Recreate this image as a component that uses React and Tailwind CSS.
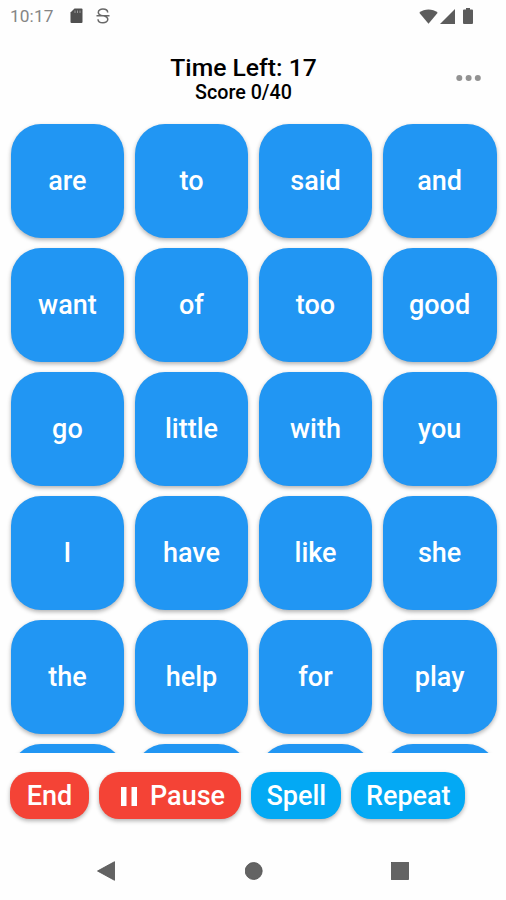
import React from 'react'

const words = [
    'are', 'to', 'said', 'and',
    'want', 'of', 'too', 'good',
    'go', 'little', 'with', 'you',
    'I', 'have', 'like', 'she',
    'the', 'help', 'for', 'play',
    '', '', '', '',
]

const StatusBar = () => {
    return (
        <div className="flex h-8 shrink-0 items-center justify-between pl-2.5 pr-[33px] text-[#6b6b6b]">
            <div className="flex items-center">
                <span className="w-[45px] text-[17.3px] leading-8 tracking-[0.1px] whitespace-nowrap text-[#858585]">10:17</span>
                <svg className="ml-[15px]" width="13" height="16" viewBox="0 0 13 16">
                    <path d="M4.5 0.5H11.5Q12.5 0.5 12.5 1.5V14Q12.5 15 11.5 15H1.5Q0.5 15 0.5 14V4.5Z" fill="#505050" />
                    <path d="M5 2.5V5M7.5 2.5V5M10 2.5V5" stroke="#999" strokeWidth="1" />
                </svg>
                <svg className="ml-[13px]" width="14" height="16" viewBox="0 0 14 16" fill="none" stroke="#686868" strokeWidth="1.5">
                    <path d="M11.7 4.5C11.5 0 2.3 0 2.3 4.4C2.3 6.2 4 7.1 6.8 7.8M7.5 7.8C10 8.5 11.8 9.3 11.8 11.3C11.8 16 2.2 16 2 11.2M0.5 7.8H13.5" />
                </svg>
            </div>
            <div className="flex items-center">
                <svg width="19" height="15" viewBox="0 0 19 15">
                    <path d="M0.3 3.8C5.5 -0.5 13.5 -0.5 18.7 3.8L9.5 14.8Z" fill="#5c5c5c" />
                </svg>
                <svg className="ml-[2px]" width="15" height="15" viewBox="0 0 15 15">
                    <path d="M15 0V15H0Z" fill="#5c5c5c" />
                </svg>
                <svg className="ml-[8px]" width="10" height="16" viewBox="0 0 10 16">
                    <path d="M3 0H7V1.5H9Q10 1.5 10 2.5V15Q10 16 9 16H1Q0 16 0 15V2.5Q0 1.5 1 1.5H3Z" fill="#5c5c5c" />
                </svg>
            </div>
        </div>
    )
}

const Header = () => {
    return (
        <div className="flex h-[82px] shrink-0 items-center pr-[24px]">
            <div className="w-[26px]" />
            <div className="flex-1 pt-[11px] pl-[5px] text-center font-medium text-black">
                <h1 className="text-[24.7px] leading-7">Time Left: 17</h1>
                <p className="text-[19.7px] leading-[22px]">Score 0/40</p>
            </div>
            <button className="w-[26px] cursor-pointer pt-[10px]">
                <svg width="26" height="8" viewBox="0 0 26 8" fill="#929292">
                    <circle cx="3.3" cy="4" r="3" />
                    <circle cx="12.6" cy="4" r="3" />
                    <circle cx="21.8" cy="4" r="3" />
                </svg>
            </button>
        </div>
    )
}

const WordTile = ({ word }) => {
    return (
        <button className="flex h-[114px] cursor-pointer items-center justify-center rounded-[30px] bg-[#2196f3] pt-px text-[27px] font-medium text-white shadow-[0_2px_4px_rgba(0,0,0,0.3)]">
            {word}
        </button>
    )
}

const ActionButton = ({ className, children }) => {
    return (
        <button className={`flex h-[47px] cursor-pointer items-center justify-center rounded-[20px] pt-px text-[27px] font-medium text-white shadow-[0_2px_4px_rgba(0,0,0,0.3)] ${className}`}>
            {children}
        </button>
    )
}

const NavBar = () => {
    return (
        <div className="flex h-[58px] shrink-0 items-center justify-between pl-[97px] pr-[97px]">
            <svg width="18" height="20" viewBox="0 0 18 20">
                <path d="M17.5 0.7V19.3L0.5 10Z" fill="#636363" stroke="#505050" strokeWidth="0.8" />
            </svg>
            <svg className="ml-px" width="18" height="18" viewBox="0 0 18 18">
                <circle cx="8.7" cy="9" r="8.5" fill="#636363" stroke="#505050" strokeWidth="0.8" />
            </svg>
            <svg width="18" height="18" viewBox="0 0 18 18">
                <rect x="0.5" y="0.5" width="17" height="17" fill="#636363" stroke="#505050" strokeWidth="0.8" />
            </svg>
        </div>
    )
}

const App = () => {
    return (
        <div className="flex h-[900px] w-[506px] flex-col overflow-hidden bg-[#fefefe] font-['Roboto',sans-serif]">
            <StatusBar />
            <Header />

            <div className="h-[639px] shrink-0 overflow-hidden px-[10.5px] pt-[9.6px]">
                <div className="grid w-[486px] grid-cols-4 gap-x-[10.2px] gap-y-[10.05px]">
                    {words.map((word, i) => (
                        <WordTile key={i} word={word} />
                    ))}
                </div>
            </div>

            <div className="flex h-[89px] shrink-0 items-start gap-2.5 pt-[19px] pl-[10.3px]">
                <ActionButton className="w-[78.5px] bg-[#f44336]">End</ActionButton>
                <ActionButton className="w-[142.5px] gap-[13px] bg-[#f44336] pl-[6px]">
                    <svg width="16" height="19" viewBox="0 0 16 19" fill="white">
                        <rect width="5.5" height="19" />
                        <rect x="10.5" width="5.5" height="19" />
                    </svg>
                    Pause
                </ActionButton>
                <ActionButton className="w-[90px] bg-[#03a9f4]">Spell</ActionButton>
                <ActionButton className="w-[114px] bg-[#03a9f4]">Repeat</ActionButton>
            </div>

            <NavBar />
        </div>
    )
}

export default App
